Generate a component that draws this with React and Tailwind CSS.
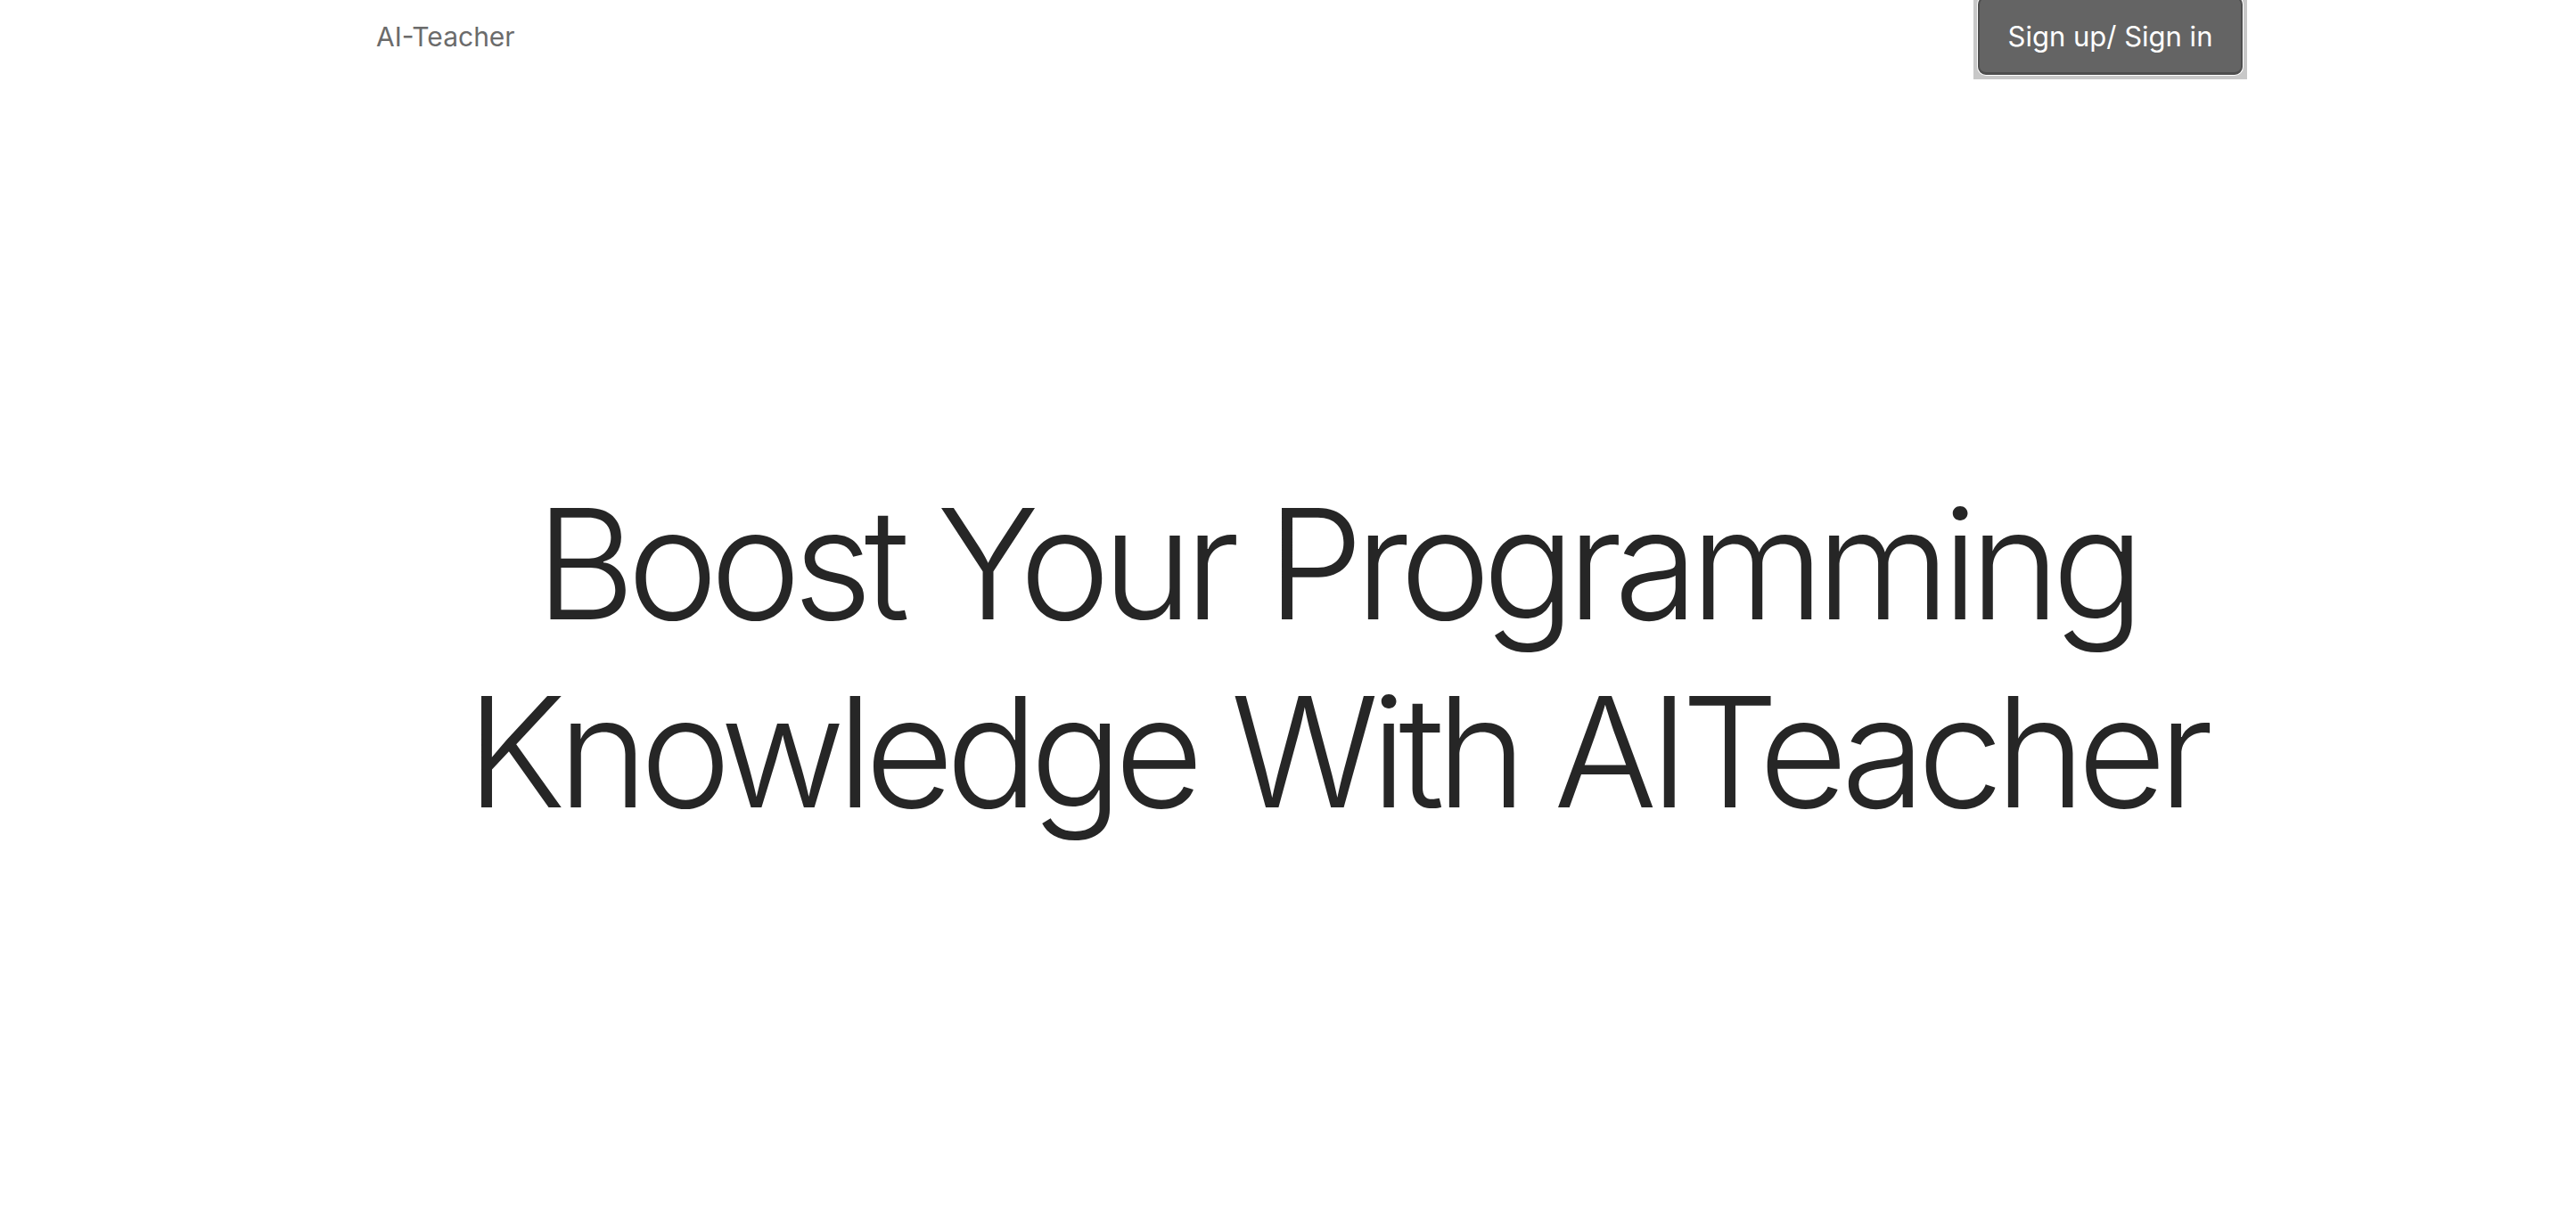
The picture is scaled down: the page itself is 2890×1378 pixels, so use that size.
import React from "react";

const App = () => {
  return (
    <div
      className="min-h-screen bg-white"
      style={{ fontFamily: 'Inter, "Liberation Sans", Arial, sans-serif' }}
    >
      {/* Navbar */}
      <nav className="flex items-start justify-between pl-[422px] pr-[369px]">
        <a href="#" className="mt-[23px] text-[30px] leading-[36px] text-[#6b6b6b]">
          AI-Teacher
        </a>
        <div className="-mt-[9px] bg-[#c8c8c8] p-[4px]">
          <div className="rounded-[10px] bg-white p-[1px]">
            <button
              type="button"
              className="flex h-[88px] w-[297px] items-center justify-center rounded-[9px] border-2 border-b-[3px] border-[#4e4e4e] bg-[#646464] pt-[4px] text-[31px] text-white"
            >
              Sign up/ Sign in
            </button>
          </div>
        </div>
      </nav>

      {/* Hero */}
      <main className="pl-[108px] pt-[438px]">
        <h1 className="text-center text-[172px] font-light leading-[211px] tracking-[-0.052em] text-[#262626]">
          Boost Your Programming
          <br />
          Knowledge With AITeacher
        </h1>
      </main>
    </div>
  );
};

export default App;
